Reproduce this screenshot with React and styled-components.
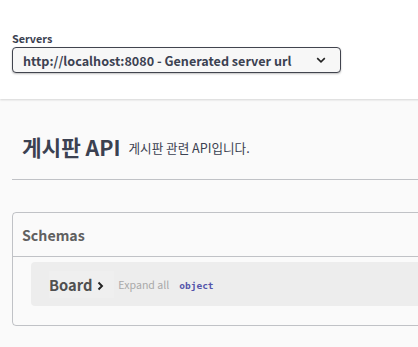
import React from "react";
import styled, { createGlobalStyle } from "styled-components";

const Global = createGlobalStyle`
  html, body { margin: 0; padding: 0; background: #fafafa; overflow: hidden; }
  body { font-family: "Noto Sans CJK KR", "Noto Sans", sans-serif; color: #3b4151; }
`;

const Page = styled.div`
  width: 460px;
`;

const SchemeBar = styled.div`
  background: #fff;
  box-shadow: 0 1px 2px 0 rgba(0, 0, 0, 0.15);
  padding: 31px 12px 26px;
  display: flex;
  flex-direction: column;
  align-items: flex-start;
`;

const Label = styled.span`
  font-size: 10.8px;
  font-weight: 700;
  line-height: 14px;
  margin-bottom: 2px;
`;

const Select = styled.div`
  box-sizing: border-box;
  width: 329px;
  height: 26px;
  border: 1px solid #41444e;
  border-radius: 4px;
  background: #f7f7f7;
  box-shadow: 0 1px 2px 0 rgba(0, 0, 0, 0.25);
  display: flex;
  align-items: center;
  justify-content: space-between;
  padding: 0 14px 0 10px;
  font-size: 12.6px;
  font-weight: 700;
  color: #3b4151;
  white-space: nowrap;
`;

const Content = styled.div`
  padding: 0 0 0 12px;
`;

const TagHeader = styled.div`
  display: flex;
  align-items: flex-end;
  height: 81px;
  box-sizing: border-box;
  padding: 0 10px 18px;
  border-bottom: 1px solid rgba(59, 65, 81, 0.3);
  margin-bottom: 32px;
`;

const Title = styled.h1`
  margin: 0;
  font-size: 21.3px;
  line-height: 28px;
  font-weight: 700;
  color: #3b4151;
`;

const Desc = styled.span`
  margin-left: 8px;
  font-size: 12.6px;
  line-height: 18px;
  color: #3b4151;
  margin-bottom: 4px;
`;

const Models = styled.section`
  border: 1px solid rgba(59, 65, 81, 0.3);
  border-radius: 4px;
  padding-bottom: 19px;
`;

const ModelsHeader = styled.h4`
  margin: 0;
  height: 43px;
  display: flex;
  align-items: center;
  padding: 0 9px;
  font-size: 14.2px;
  font-weight: 700;
  color: #606060;
  border-bottom: 1px solid rgba(59, 65, 81, 0.3);
`;

const ModelContainer = styled.div`
  margin: 5px 0 0 18px;
  height: 44px;
  background: rgba(0, 0, 0, 0.05);
  border-radius: 4px;
  display: flex;
  align-items: center;
  padding-left: 18px;
`;

const ModelName = styled.span`
  display: inline-flex;
  align-items: center;
  gap: 5px;
  font-size: 14.7px;
  font-weight: 700;
  color: #505050;
  background: rgba(255, 255, 255, 0.15);
  padding: 3px 10px 3px 0;
`;

const Expand = styled.span`
  font-size: 10.6px;
  color: #a9a9a9;
  margin-left: 4px;
  margin-top: 1px;
`;

const TypeText = styled.span`
  font-family: "DejaVu Sans Mono", monospace;
  font-size: 9.5px;
  font-weight: 700;
  color: #55a;
  margin-left: 10px;
  margin-top: 2px;
`;

export default function App() {
  return (
    <Page>
      <Global />
      <SchemeBar>
        <Label>Servers</Label>
        <Select>
          <span>http://localhost:8080 - Generated server url</span>
          <svg width="10" height="6" viewBox="0 0 10 6">
            <path d="M1.2 1.2 L5 4.8 L8.8 1.2" fill="none" stroke="#222" strokeWidth="1.6" />
          </svg>
        </Select>
      </SchemeBar>
      <Content>
        <TagHeader>
          <Title>게시판 API</Title>
          <Desc>게시판 관련 API입니다.</Desc>
        </TagHeader>
        <Models>
          <ModelsHeader>Schemas</ModelsHeader>
          <ModelContainer>
            <ModelName>
              Board
              <svg width="7" height="10" viewBox="0 0 7 10" style={{ marginTop: 3 }}>
                <path d="M1.5 1.5 L5 5 L1.5 8.5" fill="none" stroke="#222" strokeWidth="1.9" />
              </svg>
            </ModelName>
            <Expand>Expand all</Expand>
            <TypeText>object</TypeText>
          </ModelContainer>
        </Models>
      </Content>
    </Page>
  );
}
